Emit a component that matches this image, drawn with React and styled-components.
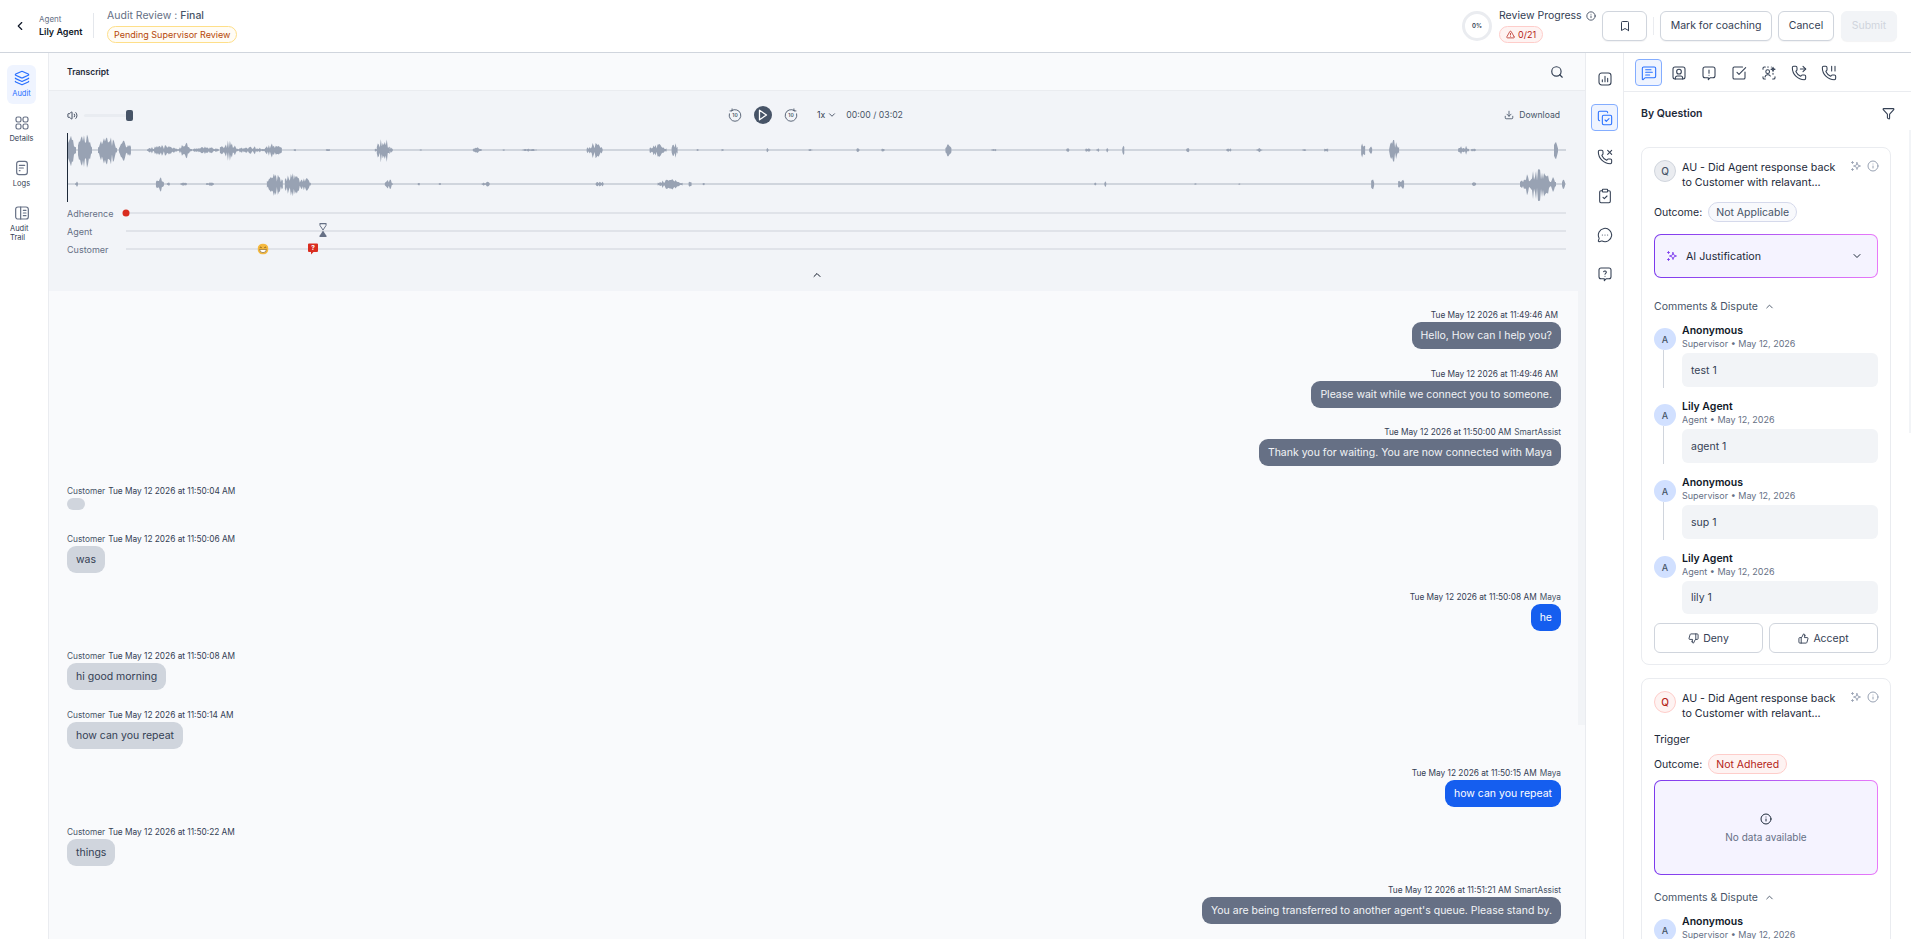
import styled, { createGlobalStyle } from 'styled-components';
import {
  Bookmark,
  CheckSquare,
  ChevronDown,
  ChevronLeft,
  ChevronUp,
  ClipboardCheck,
  CopyCheck,
  Download,
  Filter,
  Info,
  Layers,
  MessageCircleMore,
  MessageSquareText,
  PhoneForwarded,
  PhoneMissed,
  Search,
  ThumbsDown,
  ThumbsUp,
  TriangleAlert,
  Volume2,
} from 'lucide-react';

const GlobalStyle = createGlobalStyle`
  * {
    box-sizing: border-box;
  }

  html,
  body {
    margin: 0;
    height: 100%;
    overflow: hidden;
    background: #ffffff;
    font-family: 'Inter', 'Liberation Sans', sans-serif;
    color: #101828;
  }

  button {
    font-family: inherit;
  }
`;

const Page = styled.div`
  height: 939px;
  display: flex;
  flex-direction: column;
  overflow: hidden;
`;

/* top bar */

const TopBar = styled.header`
  height: 53px;
  flex-shrink: 0;
  display: flex;
  align-items: center;
  padding: 0 14px 1px 13px;
  background: #ffffff;
  border-bottom: 1px solid #d0d5dd;
`;

const BackButton = styled.button`
  width: 14px;
  height: 14px;
  padding: 0;
  border: none;
  background: none;
  color: #101828;
  display: flex;
  align-items: center;
  justify-content: center;
  margin-right: 12px;
  cursor: pointer;
`;

const AgentBlock = styled.div`
  width: 55px;
  height: 25px;
  display: flex;
  flex-direction: column;
  justify-content: space-between;
  border-right: 1px solid #e4e7ec;
  margin-right: 13px;
  flex-shrink: 0;
`;

const AgentLabel = styled.span`
  font-size: 8px;
  line-height: 12px;
  color: #667085;
`;

const AgentName = styled.span`
  font-size: 9px;
  line-height: 12px;
  font-weight: 600;
  color: #101828;
`;

const TitleBlock = styled.div`
  display: flex;
  flex-direction: column;
  align-items: flex-start;
  gap: 3px;
`;

const TitleText = styled.div`
  font-size: 10.5px;
  line-height: 14px;
  color: #667085;

  b {
    font-weight: 500;
    color: #475467;
  }
`;

const StatusPill = styled.span`
  font-size: 9px;
  line-height: 15px;
  padding: 0 6px;
  border-radius: 9px;
  border: 1px solid #fedf89;
  background: #fffcf5;
  color: #b54708;
`;

const Spacer = styled.div`
  flex: 1;
`;

const Ring = styled.div`
  width: 30px;
  height: 30px;
  border-radius: 50%;
  border: 3px solid #eaecf0;
  display: flex;
  align-items: center;
  justify-content: center;
  font-size: 6px;
  font-weight: 600;
  color: #344054;
  margin-right: 7px;
`;

const ProgressBlock = styled.div`
  width: 103px;
  display: flex;
  flex-direction: column;
  align-items: flex-start;
  gap: 3px;
`;

const ProgressTitle = styled.div`
  display: flex;
  align-items: center;
  gap: 4px;
  font-size: 10.5px;
  line-height: 14px;
  color: #344054;
  white-space: nowrap;
`;

const CountPill = styled.span`
  display: flex;
  align-items: center;
  gap: 3px;
  font-size: 9px;
  line-height: 15px;
  padding: 0 6px;
  border-radius: 9px;
  border: 1px solid #fecdca;
  background: #fef3f2;
  color: #b42318;
`;

const ActionButton = styled.button`
  height: 30px;
  width: ${(p) => p.$width}px;
  flex-shrink: 0;
  display: flex;
  align-items: center;
  justify-content: center;
  border-radius: 6px;
  border: 1px solid ${(p) => (p.$disabled ? '#f2f4f7' : '#d0d5dd')};
  background: ${(p) => (p.$disabled ? '#f2f4f7' : '#ffffff')};
  color: ${(p) => (p.$disabled ? '#d0d5dd' : '#344054')};
  font-size: 10.5px;
  margin-left: ${(p) => p.$ml || 0}px;
  box-shadow: 0 1px 1px rgba(16, 24, 40, 0.05);
`;

const TopDivider = styled.div`
  width: 1px;
  height: 18px;
  background: #eaecf0;
  margin-left: 6px;
`;

/* columns */

const Body = styled.div`
  flex: 1;
  min-height: 0;
  display: flex;
`;

const Sidebar = styled.nav`
  width: 49px;
  flex-shrink: 0;
  border-right: 1px solid #eaecf0;
  background: #ffffff;
  padding: 12px 5px 0 0;
  display: flex;
  flex-direction: column;
  align-items: center;
  gap: 6px;
`;

const NavItem = styled.div`
  width: 29px;
  min-height: 39px;
  padding-top: 5px;
  border-radius: 6px;
  display: flex;
  flex-direction: column;
  align-items: center;
  gap: 3px;
  background: ${(p) => (p.$active ? '#eff4ff' : 'transparent')};
  color: ${(p) => (p.$active ? '#2970ff' : '#667085')};
`;

const NavLabel = styled.span`
  font-size: 7.5px;
  line-height: 9px;
  width: ${(p) => (p.$wrap ? '23px' : 'auto')};
  color: ${(p) => (p.$active ? '#2970ff' : '#344054')};
`;

const Main = styled.main`
  position: relative;
  flex: 1;
  min-width: 0;
  display: flex;
  flex-direction: column;
  background: #f9fafc;
`;

const TranscriptHeader = styled.div`
  height: 38px;
  flex-shrink: 0;
  display: flex;
  align-items: center;
  justify-content: space-between;
  padding: 0 21px 0 18px;
  border-bottom: 1px solid #eaecf0;
  font-size: 8.5px;
  font-weight: 600;
  color: #1d2939;
`;

const AudioSection = styled.section`
  height: 200px;
  flex-shrink: 0;
  background: #f2f4f8;
  padding: 14px 19px 0 18px;
`;

const Controls = styled.div`
  height: 20px;
  display: grid;
  grid-template-columns: 1fr auto 1fr;
  align-items: center;
`;

const VolumeGroup = styled.div`
  display: flex;
  align-items: center;
  color: #344054;
`;

const VolumeTrack = styled.div`
  position: relative;
  width: 49px;
  height: 3px;
  margin-left: 6px;
  background: #e9ecf1;
  border-radius: 2px;
`;

const VolumeHandle = styled.div`
  position: absolute;
  right: 0;
  top: -4px;
  width: 7px;
  height: 11px;
  border-radius: 2px;
  background: #475467;
`;

const Transport = styled.div`
  display: flex;
  align-items: center;
  margin-right: 2px;
  color: #475467;
  font-size: 8.7px;
`;

const SkipIcon = styled.svg`
  width: 14px;
  height: 14px;
  flex-shrink: 0;
  fill: none;
  stroke: #475467;
  stroke-width: 1.5;
  stroke-linecap: round;
  stroke-linejoin: round;

  text {
    font-family: 'Inter', sans-serif;
    font-size: 8.5px;
    font-weight: 600;
    fill: #475467;
    stroke: none;
  }
`;

const PlayButton = styled.div`
  width: 18px;
  height: 18px;
  margin: 0 12px;
  border-radius: 50%;
  background: #475467;
  display: flex;
  align-items: center;
  justify-content: center;
`;

const Speed = styled.div`
  display: flex;
  align-items: center;
  gap: 2px;
  margin-left: 19px;
  margin-right: 9px;
  color: #344054;
`;

const DownloadLink = styled.div`
  justify-self: end;
  display: flex;
  align-items: center;
  gap: 5px;
  margin-right: 6px;
  font-size: 8.6px;
  color: #475467;
`;

const WaveBox = styled.div`
  position: relative;
  height: 69px;
  margin-top: 8px;
`;

const WaveSvg = styled.svg`
  display: block;
  width: 100%;
  height: 100%;
`;

const Playhead = styled.div`
  position: absolute;
  left: 0;
  top: 0;
  bottom: 0;
  width: 1px;
  background: #1d2939;
`;

const Timeline = styled.div`
  margin-top: 2px;
`;

const TimelineRow = styled.div`
  height: 18px;
  display: flex;
  align-items: center;
  font-size: 9px;
  color: #667085;
`;

const TimelineLabel = styled.span`
  width: 59px;
  flex-shrink: 0;
`;

const TimelineTrack = styled.div`
  position: relative;
  flex: 1;
  height: 2px;
  background: #e0e3e9;
`;

const Marker = styled.div`
  position: absolute;
  top: 50%;
  left: ${(p) => p.$left}px;
  margin-top: ${(p) => p.$dy || 0}px;
  transform: translate(-50%, -50%);
  display: flex;
`;

const RedDot = styled.div`
  width: 7px;
  height: 7px;
  border-radius: 50%;
  background: #d92d20;
`;

const CollapseRow = styled.div`
  display: flex;
  justify-content: center;
  margin-top: 11px;
  color: #101828;
`;

const Chat = styled.div`
  flex: 1;
  min-height: 0;
  overflow: hidden;
  padding: 18px 24px 0 18px;
  display: flex;
  flex-direction: column;
  gap: 18.6px;
`;

const Message = styled.div`
  display: flex;
  flex-direction: column;
  flex-shrink: 0;
  align-items: ${(p) => (p.$right ? 'flex-end' : 'flex-start')};
`;

const MessageMeta = styled.div`
  height: 12px;
  display: flex;
  align-items: center;
  gap: 3px;
  margin-bottom: 1px;
  font-size: 8.3px;
  color: #344054;
  padding-right: ${(p) => (p.$padded ? '3px' : '0')};

  span {
    color: #475467;
  }
`;

const Bubble = styled.div`
  min-height: ${(p) => (p.$empty ? '12px' : '27px')};
  margin-bottom: ${(p) => (p.$empty ? '4.5px' : '0')};
  padding: 0 9px;
  min-width: ${(p) => (p.$empty ? '18px' : '0')};
  border-radius: ${(p) => (p.$empty ? '6px' : '9px')};
  display: flex;
  align-items: center;
  font-size: 10.5px;
  background: ${(p) => p.$bg};
  color: ${(p) => p.$fg};
`;

const MainThumb = styled.div`
  position: absolute;
  right: 0;
  top: 238px;
  height: 434px;
  width: 7px;
  background: #f2f4f7;
`;

/* icon rail */

const Rail = styled.aside`
  width: 39px;
  flex-shrink: 0;
  background: #ffffff;
  border-left: 1px solid #eaecf0;
  border-right: 1px solid #eaecf0;
  padding-top: 12px;
  display: flex;
  flex-direction: column;
  align-items: center;
  gap: 12px;
`;

const IconTile = styled.div`
  width: 27px;
  height: 27px;
  flex-shrink: 0;
  border-radius: 4px;
  display: flex;
  align-items: center;
  justify-content: center;
  border: 1px solid ${(p) => (p.$active ? '#84adff' : 'transparent')};
  background: ${(p) => (p.$active ? '#eff4ff' : 'transparent')};
  color: ${(p) => (p.$active ? '#2970ff' : '#344054')};

  svg {
    stroke-width: 1.6;
  }
`;

/* right panel */

const Panel = styled.section`
  position: relative;
  width: 287px;
  flex-shrink: 0;
  background: #ffffff;
  overflow: hidden;
`;

const Tabs = styled.div`
  height: 39px;
  display: flex;
  gap: 3px;
  padding: 6px 0 0 11px;
  border-bottom: 1px solid #eaecf0;
`;

const PanelHead = styled.div`
  height: 21px;
  margin: 11px 16px 0 17px;
  display: flex;
  align-items: center;
  justify-content: space-between;
  font-size: 10.5px;
  font-weight: 600;
  color: #1d2939;
`;

const PanelThumb = styled.div`
  position: absolute;
  right: 0;
  top: 77px;
  height: 303px;
  width: 2px;
  background: #f2f4f7;
`;

const CardList = styled.div`
  display: flex;
  flex-direction: column;
  gap: 13px;
  margin: 23px 20px 0 17px;
`;

const Card = styled.article`
  flex-shrink: 0;
  border: 1px solid #eaecf0;
  border-radius: 8px;
  padding: 12px 12px 11px;
  background: #ffffff;
`;

const CardHead = styled.div`
  display: flex;
  align-items: flex-start;
`;

const QBadge = styled.div`
  width: 22px;
  height: 22px;
  flex-shrink: 0;
  border-radius: 50%;
  display: flex;
  align-items: center;
  justify-content: center;
  font-size: 10px;
  font-weight: 500;
  margin-right: 6px;
  border: 1px solid ${(p) => (p.$red ? '#fecdca' : '#d0d5dd')};
  background: ${(p) => (p.$red ? '#fef3f2' : '#eaecf0')};
  color: ${(p) => (p.$red ? '#b42318' : '#475467')};
`;

const QuestionText = styled.div`
  flex: 1;
  font-size: 10.7px;
  line-height: 15px;
  color: #1d2939;
  white-space: nowrap;
`;

const CardTools = styled.div`
  display: flex;
  align-items: center;
  gap: 5px;
  margin-right: -1px;
  color: #98a2b3;
`;

const TriggerLabel = styled.div`
  margin-top: 12px;
  font-size: 10.5px;
  line-height: 14px;
  color: #1d2939;
`;

const OutcomeRow = styled.div`
  display: flex;
  align-items: center;
  gap: 6px;
  margin-top: ${(p) => p.$mt}px;
  font-size: 10.5px;
  color: #1d2939;
`;

const OutcomePill = styled.span`
  height: 20px;
  padding: 0 7px;
  display: flex;
  align-items: center;
  border-radius: 10px;
  border: 1px solid ${(p) => (p.$red ? '#fecdca' : '#d5d9eb')};
  background: ${(p) => (p.$red ? '#fef3f2' : '#f8f9fc')};
  color: ${(p) => (p.$red ? '#b42318' : '#475467')};
`;

const AiBox = styled.div`
  height: ${(p) => (p.$empty ? '95px' : '44px')};
  margin-top: ${(p) => (p.$empty ? '6px' : '12px')};
  border-radius: 7px;
  border: 1px solid transparent;
  background: linear-gradient(#f5f3ff, #f5f3ff) padding-box,
    linear-gradient(90deg, #7c3aed, #e879f9) border-box;
  display: flex;
  font-size: 10.7px;
  color: #1d2939;
`;

const AiSummary = styled.div`
  flex: 1;
  display: flex;
  align-items: center;
  padding: 0 14px 0 11px;

  span {
    flex: 1;
    margin-left: 8px;
  }
`;

const AiEmpty = styled.div`
  flex: 1;
  display: flex;
  flex-direction: column;
  align-items: center;
  justify-content: center;
  gap: 6px;
  font-size: 10px;
  color: #667085;
`;

const CommentsToggle = styled.div`
  height: 14px;
  display: flex;
  align-items: center;
  gap: 6px;
  margin-top: ${(p) => p.$mt}px;
  font-size: 10.5px;
  color: #475467;
`;

const CommentList = styled.div`
  margin-top: 11px;
`;

const Comment = styled.div`
  display: flex;
  padding-bottom: ${(p) => (p.$last ? '0' : '13px')};
`;

const AvatarColumn = styled.div`
  width: 28px;
  flex-shrink: 0;
  padding-top: 4px;
  display: flex;
  flex-direction: column;
`;

const Avatar = styled.div`
  width: 22px;
  height: 22px;
  border-radius: 50%;
  flex-shrink: 0;
  display: flex;
  align-items: center;
  justify-content: center;
  background: #d1e0ff;
  color: #475467;
  font-size: 9px;
  font-weight: 500;
`;

const Connector = styled.div`
  flex: 1;
  width: 1px;
  margin: 0 0 -1px 9px;
  background: #d0d5dd;
`;

const CommentBody = styled.div`
  flex: 1;
  min-width: 0;
`;

const CommentName = styled.div`
  font-size: 10.5px;
  line-height: 13px;
  font-weight: 600;
  color: #101828;
`;

const CommentMeta = styled.div`
  margin-top: 1px;
  font-size: 9px;
  line-height: 12px;
  color: #667085;
`;

const CommentBubble = styled.div`
  height: ${(p) => (p.$last ? '33px' : '34px')};
  margin-top: 3px;
  padding: 0 9px;
  display: flex;
  align-items: center;
  border-radius: 6px;
  background: #f2f4f7;
  font-size: 10.5px;
  color: #344054;
`;

const ButtonRow = styled.div`
  display: grid;
  grid-template-columns: 1fr 1fr;
  gap: 6px;
  margin-top: 9px;
`;

const DecisionButton = styled.button`
  height: 30px;
  display: flex;
  align-items: center;
  justify-content: center;
  gap: 4px;
  border-radius: 6px;
  border: 1px solid #d0d5dd;
  background: #ffffff;
  color: #344054;
  font-size: 10.5px;
`;

/* drawings */

const GLYPH = {
  fill: 'none',
  stroke: 'currentColor',
  strokeWidth: 1.8,
  strokeLinecap: 'round',
  strokeLinejoin: 'round',
};

const PHONE =
  'M13.832 16.568a1 1 0 0 0 1.213-.303l.355-.465A2 2 0 0 1 17 15h3a2 2 0 0 1 2 2v3a2 2 0 0 1-2 2A18 18 0 0 1 2 4a2 2 0 0 1 2-2h3a2 2 0 0 1 2 2v3a2 2 0 0 1-.8 1.6l-.468.351a1 1 0 0 0-.292 1.233 14 14 0 0 0 6.392 6.384';

const GridIcon = (props) => (
  <svg viewBox="0 0 24 24" {...GLYPH} {...props}>
    <rect x="3" y="3" width="7.5" height="7.5" rx="2.6" />
    <rect x="13.5" y="3" width="7.5" height="7.5" rx="2.6" />
    <rect x="3" y="13.5" width="7.5" height="7.5" rx="2.6" />
    <rect x="13.5" y="13.5" width="7.5" height="7.5" rx="2.6" />
  </svg>
);

const LogIcon = (props) => (
  <svg viewBox="0 0 24 24" {...GLYPH} {...props}>
    <rect x="4" y="2" width="16" height="20" rx="3.5" />
    <path d="M8 8h8M8 12h6M8 16h1" />
  </svg>
);

const TrailIcon = (props) => (
  <svg viewBox="0 0 24 24" {...GLYPH} {...props}>
    <rect x="2.5" y="3" width="19" height="18" rx="3.5" />
    <path d="M10 3v18M14 8h4M14 12h4M14 16h4" />
  </svg>
);

const ChartBoxIcon = (props) => (
  <svg viewBox="0 0 24 24" {...GLYPH} {...props}>
    <rect x="3" y="3" width="18" height="18" rx="4" />
    <path d="M8 16v-3M12 16V8M16 16v-5" />
  </svg>
);

const BubbleMarkIcon = ({ mark, ...props }) => (
  <svg viewBox="0 0 24 24" {...GLYPH} {...props}>
    <path d="M6 3h12a3 3 0 0 1 3 3v10a3 3 0 0 1-3 3h-4l-3 3v-3H6a3 3 0 0 1-3-3V6a3 3 0 0 1 3-3z" />
    {mark === 'alert' ? (
      <path d="M12 7.5v5M12 15.5v.01" />
    ) : (
      <path d="M10 8.5a2.2 2.2 0 0 1 4 1c0 1.5-2 1.6-2 3M12 15.5v.01" />
    )}
  </svg>
);

const PersonCardIcon = (props) => (
  <svg viewBox="0 0 24 24" {...GLYPH} {...props}>
    <rect x="3" y="3" width="18" height="18" rx="3" />
    <circle cx="12" cy="10" r="3.5" />
    <path d="M6.5 21v-1.5a3 3 0 0 1 3-3h5a3 3 0 0 1 3 3V21" />
  </svg>
);

const ScanPeopleIcon = (props) => (
  <svg viewBox="0 0 24 24" {...GLYPH} {...props}>
    <path d="M3 6.500V5a2 2 0 0 1 2-2h1.500M3 17.500V19a2 2 0 0 0 2 2h1.500M21 17.500V19a2 2 0 0 1-2 2h-1.500" />
    <circle cx="10" cy="10" r="2.800" />
    <path d="M6 18a4.500 4.500 0 0 1 8-1.500" />
    <path d="M18 3.500l.8 2.200 2.200.8-2.200.8-.8 2.200-.8-2.200-2.200-.8 2.200-.8z" />
    <path d="M18 12.500v1.500M15.500 3h.01M10 3h1" />
  </svg>
);

const PhonePauseIcon = (props) => (
  <svg viewBox="0 0 24 24" {...GLYPH} {...props}>
    <path d={PHONE} />
    <path d="M16 2v7M21 2v7" />
  </svg>
);

const SparkIcon = (props) => (
  <svg viewBox="0 0 24 24" {...GLYPH} {...props}>
    <path d="M14 5l1.800 5.200L21 12l-5.200 1.800L14 19l-1.800-5.200L7 12l5.200-1.800z" />
    <path d="M5 3v4M3 5h4M5 17v4M3 19h4" />
  </svg>
);

const SkipBack = () => (
  <SkipIcon viewBox="0 0 24 24">
    <path d="M6.500 4.300A10 10 0 1 1 2.300 10" />
    <path d="M7 1.500v3.500H3.500" />
    <text x="12" y="15" textAnchor="middle">10</text>
  </SkipIcon>
);

const SkipForward = () => (
  <SkipIcon viewBox="0 0 24 24">
    <path d="M17.500 4.300A10 10 0 1 0 21.700 10" />
    <path d="M17 1.500v3.500h3.500" />
    <text x="12" y="15" textAnchor="middle">10</text>
  </SkipIcon>
);

const Hourglass = () => (
  <svg width="9" height="14" viewBox="0 0 9 14">
    <path d="M1 .7h7M1 13.300h7" stroke="#667085" strokeWidth="1.2" />
    <path d="M1.500 1v1.500L4.500 7l3-4.500V1" fill="none" stroke="#667085" strokeWidth="1" />
    <path d="M4.500 7.500L8 13H1z" fill="#667085" />
  </svg>
);

const GrinEmoji = () => (
  <svg width="11" height="11" viewBox="0 0 12 12">
    <circle cx="6" cy="6" r="6" fill="#f5b93f" />
    <path d="M2.500 4.500q1-1 2 0M7.500 4.500q1-1 2 0" fill="none" stroke="#6b4a10" strokeWidth=".9" />
    <path d="M2.300 6.500h7.400Q9.500 10 6 10T2.300 6.500z" fill="#fff" stroke="#6b4a10" strokeWidth=".6" />
  </svg>
);

const QuestionFlag = () => (
  <svg width="11" height="12" viewBox="0 0 11 12">
    <path d="M1.500 .5h8a1 1 0 0 1 1 1v6.500a1 1 0 0 1-1 1H6L3.500 11.500V9h-2a1 1 0 0 1-1-1V1.500a1 1 0 0 1 1-1z" fill="#d92d20" />
    <text x="5.500" y="7" textAnchor="middle" fontSize="6.500" fontWeight="700" fontFamily="Inter, sans-serif" fill="#ffffff">?</text>
  </svg>
);

const TOP_BURSTS = [
  [0, 9, 16], [11, 25, 18], [31, 50, 17], [52, 64, 10], [80, 112, 5], [112, 125, 8], [125, 152, 3.500], [153, 170, 10],
  [170, 198, 4], [198, 215, 7], [227, 229, 2], [259, 263, 2], [308, 310, 2], [310, 323, 14], [323, 326, 3], [353, 355, 2],
  [406, 415, 3], [436, 438, 1], [455, 470, 1.500], [520, 536, 8], [583, 600, 7], [605, 611, 8], [630, 632, 3], [655, 657, 2],
  [700, 702, 2], [742, 746, 1.500], [790, 793, 2], [815, 818, 3], [879, 885, 6], [925, 930, 1.500], [1000, 1003, 2], [1019, 1024, 2.500],
  [1030, 1033, 2], [1040, 1042, 3], [1056, 1058, 8], [1120, 1123, 2], [1160, 1165, 2], [1190, 1196, 2], [1236, 1240, 1.500], [1258, 1262, 3],
  [1295, 1299, 14], [1303, 1306, 5], [1323, 1333, 11], [1392, 1403, 5], [1405, 1410, 2], [1488, 1492, 11],
];

const BOTTOM_BURSTS = [
  [8, 11, 3], [89, 97, 8], [100, 103, 2], [113, 120, 2], [139, 147, 2], [200, 216, 11], [218, 233, 13], [233, 244, 7],
  [318, 326, 6], [351, 353, 2], [372, 374, 2], [415, 423, 3], [529, 537, 4], [591, 616, 5], [622, 625, 3], [636, 638, 2],
  [1028, 1030, 2], [1038, 1040, 3], [1128, 1130, 1.500], [1172, 1174, 1], [1305, 1308, 7], [1332, 1338, 7], [1406, 1410, 2],
  [1454, 1490, 15], [1496, 1499, 10],
];

function burstPath(bursts, center, seed) {
  let state = seed;
  const rand = () => {
    state = (state * 16807) % 2147483647;
    return state / 2147483647;
  };
  return bursts
    .map(([from, to, height]) => {
      const up = [];
      const down = [];
      for (let x = from; x <= to; x += 1) {
        const shape = Math.sin((Math.PI * (x - from + 0.5)) / (to - from + 1));
        const amp = height * (0.25 + 0.75 * shape) * (0.2 + 0.8 * rand());
        up.push(`${x} ${(center - amp).toFixed(1)}`);
        down.unshift(`${x} ${(center + amp * 1.15).toFixed(1)}`);
      }
      return `M${up.join('L')}L${down.join('L')}Z`;
    })
    .join('');
}

const Waveform = () => (
  <WaveSvg viewBox="0 0 1500 69" preserveAspectRatio="none">
    <rect x="0" y="16" width="1500" height="2" fill="#d0d5dd" />
    <rect x="0" y="50" width="1500" height="2" fill="#d0d5dd" />
    <path d={burstPath(TOP_BURSTS, 17, 4711)} fill="#98a2b3" />
    <path d={burstPath(BOTTOM_BURSTS, 51, 921)} fill="#98a2b3" />
  </WaveSvg>
);

const RAIL_ICONS = [
  <ChartBoxIcon key="chart" width={16} height={16} />,
  <CopyCheck key="copy" size={16} />,
  <PhoneMissed key="missed" size={16} />,
  <ClipboardCheck key="clip" size={16} />,
  <MessageCircleMore key="more" size={16} />,
  <BubbleMarkIcon key="ask" mark="question" width={16} height={16} />,
];

const TAB_ICONS = [
  <MessageSquareText key="text" size={16} />,
  <PersonCardIcon key="person" width={16} height={16} />,
  <BubbleMarkIcon key="alert" mark="alert" width={16} height={16} />,
  <CheckSquare key="check" size={16} />,
  <ScanPeopleIcon key="scan" width={16} height={16} />,
  <PhoneForwarded key="fwd" size={16} />,
  <PhonePauseIcon key="pause" width={16} height={16} />,
];

const GREY = { bg: '#667085', fg: '#f2f4f7' };
const BLUE = { bg: '#155eef', fg: '#ffffff' };
const LIGHT = { bg: '#d0d5dd', fg: '#344054' };

const MESSAGES = [
  { right: true, time: '11:49:46 AM', text: 'Hello, How can I help you?', ...GREY },
  { right: true, time: '11:49:46 AM', text: 'Please wait while we connect you to someone.', ...GREY },
  { right: true, time: '11:50:00 AM', who: 'SmartAssist', text: 'Thank you for waiting. You are now connected with Maya', ...GREY },
  { who: 'Customer', time: '11:50:04 AM', text: '', ...LIGHT },
  { who: 'Customer', time: '11:50:06 AM', text: 'was', ...LIGHT },
  { right: true, time: '11:50:08 AM', who: 'Maya', text: 'he', ...BLUE },
  { who: 'Customer', time: '11:50:08 AM', text: 'hi good morning', ...LIGHT },
  { who: 'Customer', time: '11:50:14 AM', text: 'how can you repeat', ...LIGHT },
  { right: true, time: '11:50:15 AM', who: 'Maya', text: 'how can you repeat', ...BLUE },
  { who: 'Customer', time: '11:50:22 AM', text: 'things', ...LIGHT },
  { right: true, time: '11:51:21 AM', who: 'SmartAssist', text: "You are being transferred to another agent's queue. Please stand by.", ...GREY },
];

const COMMENTS = [
  { name: 'Anonymous', role: 'Supervisor', text: 'test 1' },
  { name: 'Lily Agent', role: 'Agent', text: 'agent 1' },
  { name: 'Anonymous', role: 'Supervisor', text: 'sup 1' },
  { name: 'Lily Agent', role: 'Agent', text: 'lily 1' },
];

function Comments({ items }) {
  return (
    <CommentList>
      {items.map((c, i) => {
        const last = i === COMMENTS.length - 1;
        return (
          <Comment key={i} $last={last}>
            <AvatarColumn>
              <Avatar>A</Avatar>
              {!last && <Connector />}
            </AvatarColumn>
            <CommentBody>
              <CommentName>{c.name}</CommentName>
              <CommentMeta>{c.role} • May 12, 2026</CommentMeta>
              {c.text && <CommentBubble $last={last}>{c.text}</CommentBubble>}
            </CommentBody>
          </Comment>
        );
      })}
    </CommentList>
  );
}

function QuestionHead({ red }) {
  return (
    <CardHead>
      <QBadge $red={red}>Q</QBadge>
      <QuestionText>
        AU - Did Agent response back
        <br />
        to Customer with relavant...
      </QuestionText>
      <CardTools>
        <SparkIcon width={12} height={12} />
        <Info size={12} />
      </CardTools>
    </CardHead>
  );
}

export default function App() {
  return (
    <Page>
      <GlobalStyle />
      <TopBar>
        <BackButton>
          <ChevronLeft size={14} />
        </BackButton>
        <AgentBlock>
          <AgentLabel>Agent</AgentLabel>
          <AgentName>Lily Agent</AgentName>
        </AgentBlock>
        <TitleBlock>
          <TitleText>
            Audit Review : <b>Final</b>
          </TitleText>
          <StatusPill>Pending Supervisor Review</StatusPill>
        </TitleBlock>
        <Spacer />
        <Ring>0%</Ring>
        <ProgressBlock>
          <ProgressTitle>
            Review Progress
            <Info size={10} />
          </ProgressTitle>
          <CountPill>
            <TriangleAlert size={9} />
            0/21
          </CountPill>
        </ProgressBlock>
        <ActionButton $width={45}>
          <Bookmark size={12} />
        </ActionButton>
        <TopDivider />
        <ActionButton $width={112} $ml={6}>
          Mark for coaching
        </ActionButton>
        <ActionButton $width={56} $ml={6}>
          Cancel
        </ActionButton>
        <ActionButton $width={56} $ml={7} $disabled>
          Submit
        </ActionButton>
      </TopBar>

      <Body>
        <Sidebar>
          <NavItem $active>
            <Layers size={16} strokeWidth={1.8} />
            <NavLabel $active>Audit</NavLabel>
          </NavItem>
          <NavItem>
            <GridIcon width={16} height={16} />
            <NavLabel>Details</NavLabel>
          </NavItem>
          <NavItem>
            <LogIcon width={16} height={16} />
            <NavLabel>Logs</NavLabel>
          </NavItem>
          <NavItem>
            <TrailIcon width={16} height={16} />
            <NavLabel $wrap>Audit Trail</NavLabel>
          </NavItem>
        </Sidebar>

        <Main>
          <TranscriptHeader>
            Transcript
            <Search size={14} color="#344054" />
          </TranscriptHeader>

          <AudioSection>
            <Controls>
              <VolumeGroup>
                <Volume2 size={11} />
                <VolumeTrack>
                  <VolumeHandle />
                </VolumeTrack>
              </VolumeGroup>
              <Transport>
                <SkipBack />
                <PlayButton>
                  <svg width="10" height="12" viewBox="0 0 10 12">
                    <path d="M1.500 1.200L8.500 6l-7 4.800z" fill="none" stroke="#fff" strokeWidth="1.300" strokeLinejoin="round" />
                  </svg>
                </PlayButton>
                <SkipForward />
                <Speed>
                  1x
                  <ChevronDown size={10} />
                </Speed>
                00:00 / 03:02
              </Transport>
              <DownloadLink>
                <Download size={10} />
                Download
              </DownloadLink>
            </Controls>

            <WaveBox>
              <Waveform />
              <Playhead />
            </WaveBox>

            <Timeline>
              <TimelineRow>
                <TimelineLabel>Adherence</TimelineLabel>
                <TimelineTrack>
                  <Marker $left={0}>
                    <RedDot />
                  </Marker>
                </TimelineTrack>
              </TimelineRow>
              <TimelineRow>
                <TimelineLabel>Agent</TimelineLabel>
                <TimelineTrack>
                  <Marker $left={197} $dy={-1}>
                    <Hourglass />
                  </Marker>
                </TimelineTrack>
              </TimelineRow>
              <TimelineRow>
                <TimelineLabel>Customer</TimelineLabel>
                <TimelineTrack>
                  <Marker $left={137}>
                    <GrinEmoji />
                  </Marker>
                  <Marker $left={187}>
                    <QuestionFlag />
                  </Marker>
                </TimelineTrack>
              </TimelineRow>
            </Timeline>

            <CollapseRow>
              <ChevronUp size={12} />
            </CollapseRow>
          </AudioSection>

          <Chat>
            {MESSAGES.map((m, i) => (
              <Message key={i} $right={m.right}>
                <MessageMeta $padded={m.right && !m.who}>
                  {!m.right && <span>{m.who}</span>}
                  Tue May 12 2026 at {m.time}
                  {m.right && m.who && <span>{m.who}</span>}
                </MessageMeta>
                <Bubble $bg={m.bg} $fg={m.fg} $empty={!m.text}>
                  {m.text}
                </Bubble>
              </Message>
            ))}
          </Chat>
          <MainThumb />
        </Main>

        <Rail>
          {RAIL_ICONS.map((icon, i) => (
            <IconTile key={i} $active={i === 1}>
              {icon}
            </IconTile>
          ))}
        </Rail>

        <Panel>
          <Tabs>
            {TAB_ICONS.map((icon, i) => (
              <IconTile key={i} $active={i === 0}>
                {icon}
              </IconTile>
            ))}
          </Tabs>
          <PanelHead>
            By Question
            <Filter size={13} color="#344054" />
          </PanelHead>

          <CardList>
            <Card>
              <QuestionHead />
              <OutcomeRow $mt={12}>
                Outcome:
                <OutcomePill>Not Applicable</OutcomePill>
              </OutcomeRow>
              <AiBox>
                <AiSummary>
                  <SparkIcon width={12} height={12} color="#7c3aed" />
                  <span>AI Justification</span>
                  <ChevronDown size={12} />
                </AiSummary>
              </AiBox>
              <CommentsToggle $mt={21}>
                Comments &amp; Dispute
                <ChevronUp size={11} />
              </CommentsToggle>
              <Comments items={COMMENTS} />
              <ButtonRow>
                <DecisionButton>
                  <ThumbsDown size={11} />
                  Deny
                </DecisionButton>
                <DecisionButton>
                  <ThumbsUp size={11} />
                  Accept
                </DecisionButton>
              </ButtonRow>
            </Card>

            <Card>
              <QuestionHead red />
              <TriggerLabel>Trigger</TriggerLabel>
              <OutcomeRow $mt={7}>
                Outcome:
                <OutcomePill $red>Not Adhered</OutcomePill>
              </OutcomeRow>
              <AiBox $empty>
                <AiEmpty>
                  <Info size={12} color="#1d2939" />
                  No data available
                </AiEmpty>
              </AiBox>
              <CommentsToggle $mt={15}>
                Comments &amp; Dispute
                <ChevronUp size={11} />
              </CommentsToggle>
              <Comments items={[{ name: 'Anonymous', role: 'Supervisor' }]} />
            </Card>
          </CardList>
          <PanelThumb />
        </Panel>
      </Body>
    </Page>
  );
}
